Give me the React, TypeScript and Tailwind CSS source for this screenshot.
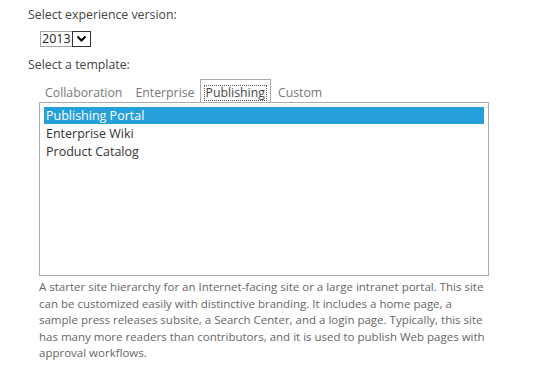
import React from "react";

export default function App() {
  const font = { fontFamily: '"Open Sans", "Noto Sans", sans-serif' };
  return (
    <div className="w-[541px] h-[366px] bg-white overflow-hidden" style={font}>
      <div className="pl-[28px] pt-[6px]">
        <div className="text-[12.3px] leading-[18px] text-[#444]">Select experience version:</div>
        <div className="ml-[12px] mt-[7px] flex w-[51px] h-[16px] border border-[#a6a6a6] bg-white">
          <div className="flex-1 text-[12.5px] leading-[14px] text-[#222] pl-[1px]">2013</div>
          <div className="w-[19px] h-[16px] -mt-[1px] -mr-[1px] border border-[#333] bg-white flex items-center justify-center">
            <svg width="11" height="8" viewBox="0 0 11 8">
              <path d="M1.5 1.5 L5.5 5.5 L9.5 1.5" fill="none" stroke="#000" strokeWidth="2" />
            </svg>
          </div>
        </div>
        <div className="mt-[9px] text-[12.3px] leading-[18px] text-[#444]">Select a template:</div>
      </div>
      <div className="ml-[39px] mt-[5px] w-[450px]">
        <div className="flex items-end h-[23px] text-[12.3px] text-[#777] pl-[2px]">
          <div className="px-[4px] leading-[18px]">Collaboration</div>
          <div className="pl-[9px] pr-[5px] leading-[18px]">Enterprise</div>
          <div className="h-[23px] px-[3px] pt-[5px] border border-b-0 border-[#ababab] bg-white">
            <div className="border border-dotted border-[#555] leading-[14px] px-[1px] text-[#444]">Publishing</div>
          </div>
          <div className="px-[7px] leading-[18px]">Custom</div>
        </div>
        <div className="h-[174px] border border-[#ababab] px-[4px] pt-[4px] text-[12.5px] text-[#333]">
          <div className="h-[17px] leading-[18px] bg-[#26a0da] text-white pl-[2px]">Publishing Portal</div>
          <div className="h-[18px] leading-[19px] pl-[2px]">Enterprise Wiki</div>
          <div className="h-[18px] leading-[19px] pl-[2px]">Product Catalog</div>
        </div>
        <p className="mt-[3px] w-[450px] text-[11.5px] leading-[16.5px] text-[#666]">
          A starter site hierarchy for an Internet-facing site or a large intranet portal. This site can be customized easily with distinctive branding. It includes a home page, a sample press releases subsite, a Search Center, and a login page. Typically, this site has many more readers than contributors, and it is used to publish Web pages with approval workflows.
        </p>
      </div>
    </div>
  );
}
